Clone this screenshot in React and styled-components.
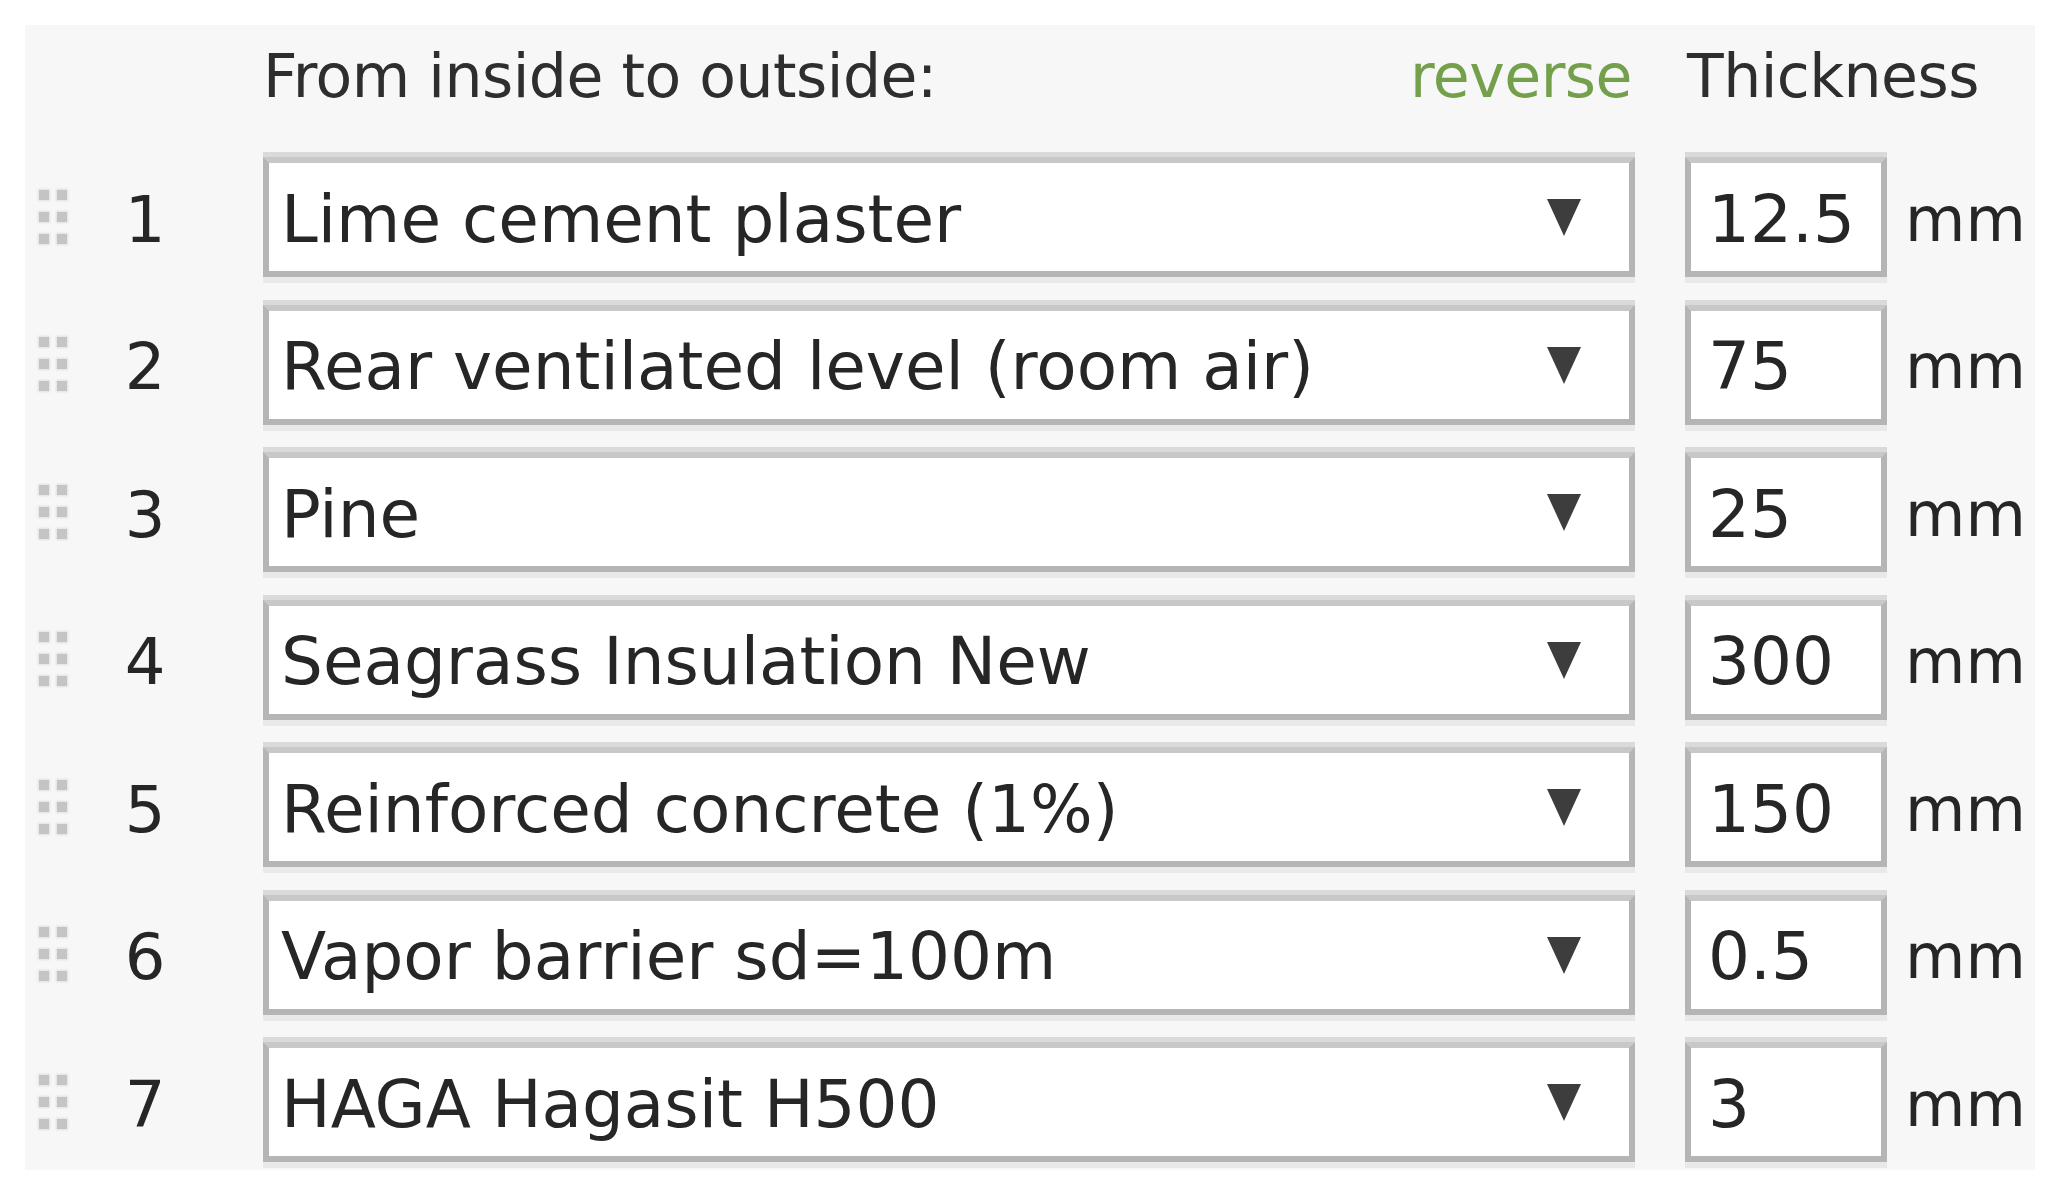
import React from "react";
import styled, { createGlobalStyle } from "styled-components";

const GlobalStyle = createGlobalStyle`
  html, body { margin: 0; padding: 0; background: #ffffff; }
  body { font-family: "DejaVu Sans", Verdana, sans-serif; color: #333; }
`;

const Page = styled.div`
  padding: 25px 33px 30px 25px;
`;

const Panel = styled.div`
  width: 2010px;
  background: #f7f7f7;
  padding: 16px 0 8px 0;
  box-sizing: border-box;
`;

const HeaderRow = styled.div`
  display: flex;
  align-items: baseline;
  height: 70px;
  font-size: 60px;
  line-height: 70px;
  letter-spacing: -0.5px;
  margin-bottom: 46px;
`;

const HeaderSpacer = styled.div`
  width: 238px;
  flex: none;
`;

const HeaderLabels = styled.div`
  width: 1372px;
  flex: none;
  display: flex;
  justify-content: space-between;
  padding-right: 3px;
  box-sizing: border-box;
  color: #2e2e2e;
`;

const Reverse = styled.span`
  color: #74a04c;
  cursor: pointer;
`;

const ThicknessLabel = styled.div`
  margin-left: 52px;
  color: #2e2e2e;
`;

const Rows = styled.div`
  display: flex;
  flex-direction: column;
  gap: 27.5px;
`;

const Row = styled.div`
  display: flex;
  align-items: center;
  height: 120px;
  font-size: 66px;
  color: #262626;
`;

const Lead = styled.div`
  width: 238px;
  flex: none;
  display: flex;
  align-items: center;
  padding-left: 14px;
  box-sizing: border-box;
`;

const Handle = styled.div`
  display: grid;
  grid-template-columns: 10px 10px;
  column-gap: 8px;
  row-gap: 12px;
`;

const Dot = styled.span`
  width: 10px;
  height: 10px;
  background: #c4c4c4;
  box-shadow: 0 0 2px 1px #e0e0e0;
`;

const Num = styled.div`
  width: 50px;
  margin-left: 53px;
  text-align: center;
  padding-top: 6px;
  line-height: 1.164;
  font-size: 64px;
`;

const boxBorder = `
  box-sizing: border-box;
  height: 120px;
  background: #ffffff;
  border: 6px solid #b5b5b5;
  border-top-color: #c8c8c8;
  box-shadow: 0 -5px 0 #dadada, 0 6px 0 #e9e9e9;
`;

const SelectBox = styled.div`
  ${boxBorder}
  width: 1372px;
  flex: none;
  display: flex;
  align-items: center;
  justify-content: space-between;
  padding: 6px 47px 0 12px;
  line-height: 1.164;
  white-space: nowrap;
`;

const Arrow = styled.svg`
  width: 36px;
  height: 40px;
  flex: none;
  margin-top: -6px;
`;

const InputBox = styled.div`
  ${boxBorder}
  width: 202px;
  flex: none;
  margin-left: 50px;
  display: flex;
  align-items: center;
  padding: 6px 0 0 17px;
  line-height: 1.164;
`;

const Unit = styled.div`
  margin-left: 18px;
  padding-top: 6px;
  line-height: 1.164;
  font-size: 62px;
`;

const layers = [
  { name: "Lime cement plaster", t: "12.5" },
  { name: "Rear ventilated level (room air)", t: "75" },
  { name: "Pine", t: "25" },
  { name: "Seagrass Insulation New", t: "300" },
  { name: "Reinforced concrete (1%)", t: "150" },
  { name: "Vapor barrier sd=100m", t: "0.5" },
  { name: "HAGA Hagasit H500", t: "3" },
];

const DragHandle = () => (
  <Handle>
    {Array.from({ length: 6 }).map((_, i) => (
      <Dot key={i} />
    ))}
  </Handle>
);

export default function App() {
  return (
    <>
      <GlobalStyle />
      <Page>
        <Panel>
          <HeaderRow>
            <HeaderSpacer />
            <HeaderLabels>
              <span>From inside to outside:</span>
              <Reverse>reverse</Reverse>
            </HeaderLabels>
            <ThicknessLabel>Thickness</ThicknessLabel>
          </HeaderRow>
          <Rows>
            {layers.map((l, i) => (
              <Row key={i}>
                <Lead>
                  <DragHandle />
                  <Num>{i + 1}</Num>
                </Lead>
                <SelectBox>
                  <span>{l.name}</span>
                  <Arrow viewBox="0 0 36 40">
                    <polygon points="1,2 35,2 18,39" fill="#3d3d3d" />
                  </Arrow>
                </SelectBox>
                <InputBox>{l.t}</InputBox>
                <Unit>mm</Unit>
              </Row>
            ))}
          </Rows>
        </Panel>
      </Page>
    </>
  );
}
